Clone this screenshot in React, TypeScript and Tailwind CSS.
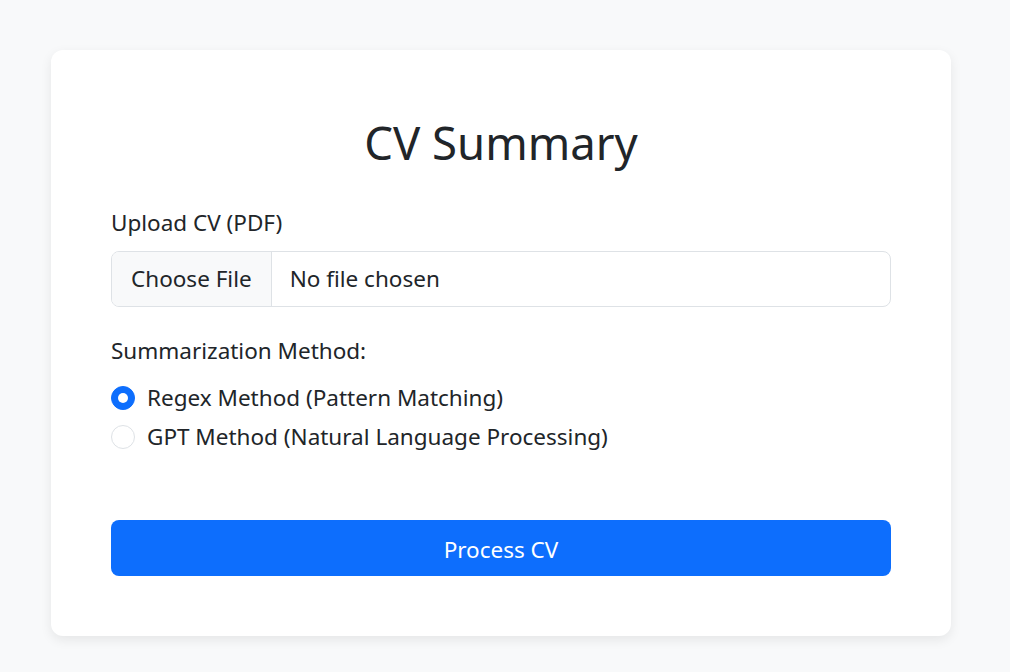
import { useState } from "react";

const App = () => {
  const [method, setMethod] = useState("regex");

  return (
    <div
      className="min-h-screen bg-[#f8f9fa] pt-[50px] text-[#212529]"
      style={{ fontFamily: '"Noto Sans", "Open Sans", sans-serif' }}
    >
      <div className="ml-[51px] w-[900px] rounded-[12px] bg-white px-[60px] pt-[60px] pb-[60px] shadow-[0_4px_12px_rgba(0,0,0,0.08)]">
        <h1 className="text-center text-[45.5px] leading-[64px] font-normal">CV Summary</h1>

        {/* upload */}
        <div className="mt-[34px]">
          <div className="text-[22.5px] leading-[30px]">Upload CV (PDF)</div>
          <div className="mt-[13px] flex h-[56px] overflow-hidden rounded-[8px] border border-[#dee2e6] text-[22.5px]">
            <div className="flex items-center border-r border-[#dee2e6] bg-[#f8f9fa] px-[19px]">
              Choose File
            </div>
            <div className="flex items-center pl-[18px]">No file chosen</div>
          </div>
        </div>

        {/* method */}
        <div className="mt-[29px]">
          <div className="text-[22.5px] leading-[30px]">Summarization Method:</div>
          <div className="mt-[12px]">
            <label
              className="flex h-[39px] cursor-pointer items-center gap-[12px] text-[22.5px]"
              onClick={() => setMethod("regex")}
            >
              <span
                className={`flex h-[24px] w-[24px] shrink-0 items-center justify-center rounded-full border ${
                  method === "regex" ? "border-[#0d6efd] bg-[#0d6efd]" : "border-[#dee2e6] bg-white"
                }`}
              >
                {method === "regex" && <span className="h-[10px] w-[10px] rounded-full bg-white"></span>}
              </span>
              Regex Method (Pattern Matching)
            </label>
            <label
              className="flex h-[39px] cursor-pointer items-center gap-[12px] text-[22.5px]"
              onClick={() => setMethod("gpt")}
            >
              <span
                className={`flex h-[24px] w-[24px] shrink-0 items-center justify-center rounded-full border ${
                  method === "gpt" ? "border-[#0d6efd] bg-[#0d6efd]" : "border-[#dee2e6] bg-white"
                }`}
              >
                {method === "gpt" && <span className="h-[10px] w-[10px] rounded-full bg-white"></span>}
              </span>
              GPT Method (Natural Language Processing)
            </label>
          </div>
        </div>

        <button className="mt-[64px] h-[56px] w-full rounded-[8px] bg-[#0d6efd] pt-[3px] text-[22.5px] text-white">
          Process CV
        </button>
      </div>
    </div>
  );
};

export default App;
